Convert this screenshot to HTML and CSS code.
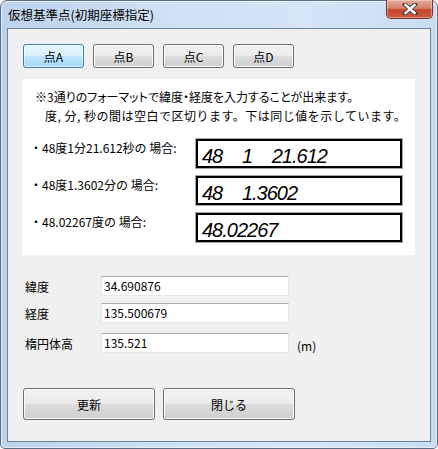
FILE: index.html
```html
<!DOCTYPE html>
<html lang="ja">
<head>
<meta charset="utf-8">
<title>仮想基準点(初期座標指定)</title>
<link rel="stylesheet" href="styles.css">
</head>
<body>
<div class="window">
  <div class="titlebar">
    <span class="title">仮想基準点(初期座標指定)</span>
    <div class="close">
      <svg width="16" height="12" viewBox="0 0 16 12">
        <path d="M3 1.5 L13 10.5 M13 1.5 L3 10.5" fill="none" stroke="#3a3a3a" stroke-width="4.2" stroke-linecap="square"/>
        <path d="M3.5 2 L12.5 10 M12.5 2 L3.5 10" fill="none" stroke="#ffffff" stroke-width="2.4" stroke-linecap="square"/>
      </svg>
    </div>
  </div>
  <div class="client">
    <div class="tabs">
      <div class="btn tab selected">点A</div>
      <div class="btn tab">点B</div>
      <div class="btn tab">点C</div>
      <div class="btn tab">点D</div>
    </div>
    <div class="panel">
      <p class="note">※3通りのフォーマットで緯度・経度を入力することが出来ます。</p>
      <p class="note indent">度, 分, 秒の間は空白で区切ります。下は同じ値を示しています。</p>
      <div class="examples">
        <div class="example">
          <span class="ex-label">・48度1分21.612秒の 場合:</span>
          <div class="ex-box">48   1   21.612</div>
        </div>
        <div class="example">
          <span class="ex-label">・48度1.3602分の 場合:</span>
          <div class="ex-box">48   1.3602</div>
        </div>
        <div class="example">
          <span class="ex-label">・48.02267度の 場合:</span>
          <div class="ex-box">48.02267</div>
        </div>
      </div>
    </div>
    <div class="fields">
      <div class="field">
        <span class="field-label">緯度</span>
        <div class="input">34.690876</div>
      </div>
      <div class="field second">
        <span class="field-label">経度</span>
        <div class="input">135.500679</div>
      </div>
      <div class="field third">
        <span class="field-label">楕円体高</span>
        <div class="input">135.521</div>
        <span class="unit">(m)</span>
      </div>
    </div>
    <div class="actions">
      <div class="btn action">更新</div>
      <div class="btn action">閉じる</div>
    </div>
  </div>
</div>
</body>
</html>
```

FILE: styles.css
```css
html, body {
  margin: 0;
  padding: 0;
  background: #ffffff;
}
body {
  width: 438px;
  height: 449px;
  font-family: "Noto Sans CJK JP", "Noto Sans", sans-serif;
  font-size: 12px;
  color: #000;
}
.window {
  position: relative;
  box-sizing: border-box;
  width: 438px;
  height: 449px;
  border: 1px solid #5b6e84;
  border-radius: 7px 7px 5px 5px;
  padding: 0 6px 6px 6px;
  background: linear-gradient(90deg, #bcd3ec 0%, #cfe1f4 40%, #d6e6f7 70%, #c8dcf2 100%);
  box-shadow: inset 0 0 0 1px rgba(255,255,255,0.55);
}
.titlebar {
  height: 27px;
  display: flex;
  align-items: center;
}
.title {
  padding-left: 1px;
  margin-top: -1px;
  font-size: 12.5px;
  color: #000;
}
.close {
  position: absolute;
  top: -1px;
  right: 4px;
  width: 47px;
  height: 19px;
  box-sizing: border-box;
  border: 1px solid #7a3526;
  border-top: none;
  border-radius: 0 0 5px 5px;
  background: linear-gradient(#e9a999 0%, #d7826e 45%, #c4452f 55%, #cd5a3f 100%);
  display: flex;
  align-items: center;
  justify-content: center;
  box-shadow: inset 0 0 0 1px rgba(255,255,255,0.35);
}
.client {
  box-sizing: border-box;
  height: 414px;
  border: 1px solid #6f8397;
  background: #f0f0f0;
  padding-top: 15px;
}
.btn {
  box-sizing: border-box;
  border: 1px solid #707070;
  border-radius: 3px;
  background: linear-gradient(#f2f2f2 0%, #ebebeb 50%, #dddddd 50%, #cfcfcf 100%);
  box-shadow: inset 0 0 0 1px #fbfbfb;
  display: flex;
  align-items: center;
  justify-content: center;
}
.tabs {
  display: flex;
  gap: 9px;
  margin-left: 15px;
}
.tab {
  width: 61px;
  height: 24px;
}
.tab.selected {
  border-color: #3c7fb1;
  background: linear-gradient(#e8f5fc 0%, #d9f0fc 50%, #bee6fd 50%, #a7d9f5 100%);
  box-shadow: inset 0 0 0 1px #ffffff80;
}
.panel {
  box-sizing: border-box;
  margin: 11px 0 0 14px;
  width: 393px;
  height: 176px;
  background: #ffffff;
  padding-top: 8px;
}
.note {
  margin: 0;
  line-height: 19px;
  padding-left: 13px;
  white-space: nowrap;
  font-feature-settings: "palt";
}
.note.indent {
  padding-left: 23px;
  font-feature-settings: normal;
  letter-spacing: 0.5px;
}
.examples {
  margin-top: 14px;
  display: flex;
  flex-direction: column;
  gap: 8px;
}
.example {
  display: flex;
  align-items: flex-start;
}
.ex-label {
  width: 166px;
  padding-left: 8px;
  line-height: 18px;
  white-space: nowrap;
}
.ex-box {
  box-sizing: border-box;
  width: 206px;
  height: 29px;
  border: 2px solid #000;
  outline: 1px solid rgba(0,0,0,0.35);
  padding: 4px 0 0 4px;
  font-family: "Liberation Sans", Arial, sans-serif;
  font-style: italic;
  font-size: 20px;
  line-height: 22px;
  letter-spacing: -1px;
  word-spacing: 2px;
  white-space: pre;
}
.fields {
  margin: 21px 0 0 17px;
}
.field {
  display: flex;
  align-items: center;
  height: 20px;
}
.field.second {
  margin-top: 7px;
}
.field.third {
  margin-top: 10px;
}
.field-label {
  width: 76px;
  line-height: 20px;
  margin-top: 2px;
}
.input {
  box-sizing: border-box;
  width: 188px;
  height: 20px;
  background: #fff;
  border: 1px solid #e3e9ef;
  border-top-color: #abadb3;
  border-left-color: #e2e3ea;
  padding-left: 2px;
  line-height: 18px;
}
.unit {
  margin-left: 8px;
  margin-top: 4px;
}
.actions {
  display: flex;
  gap: 8px;
  margin: 35px 0 0 15px;
}
.action {
  width: 132px;
  height: 32px;
}
```
